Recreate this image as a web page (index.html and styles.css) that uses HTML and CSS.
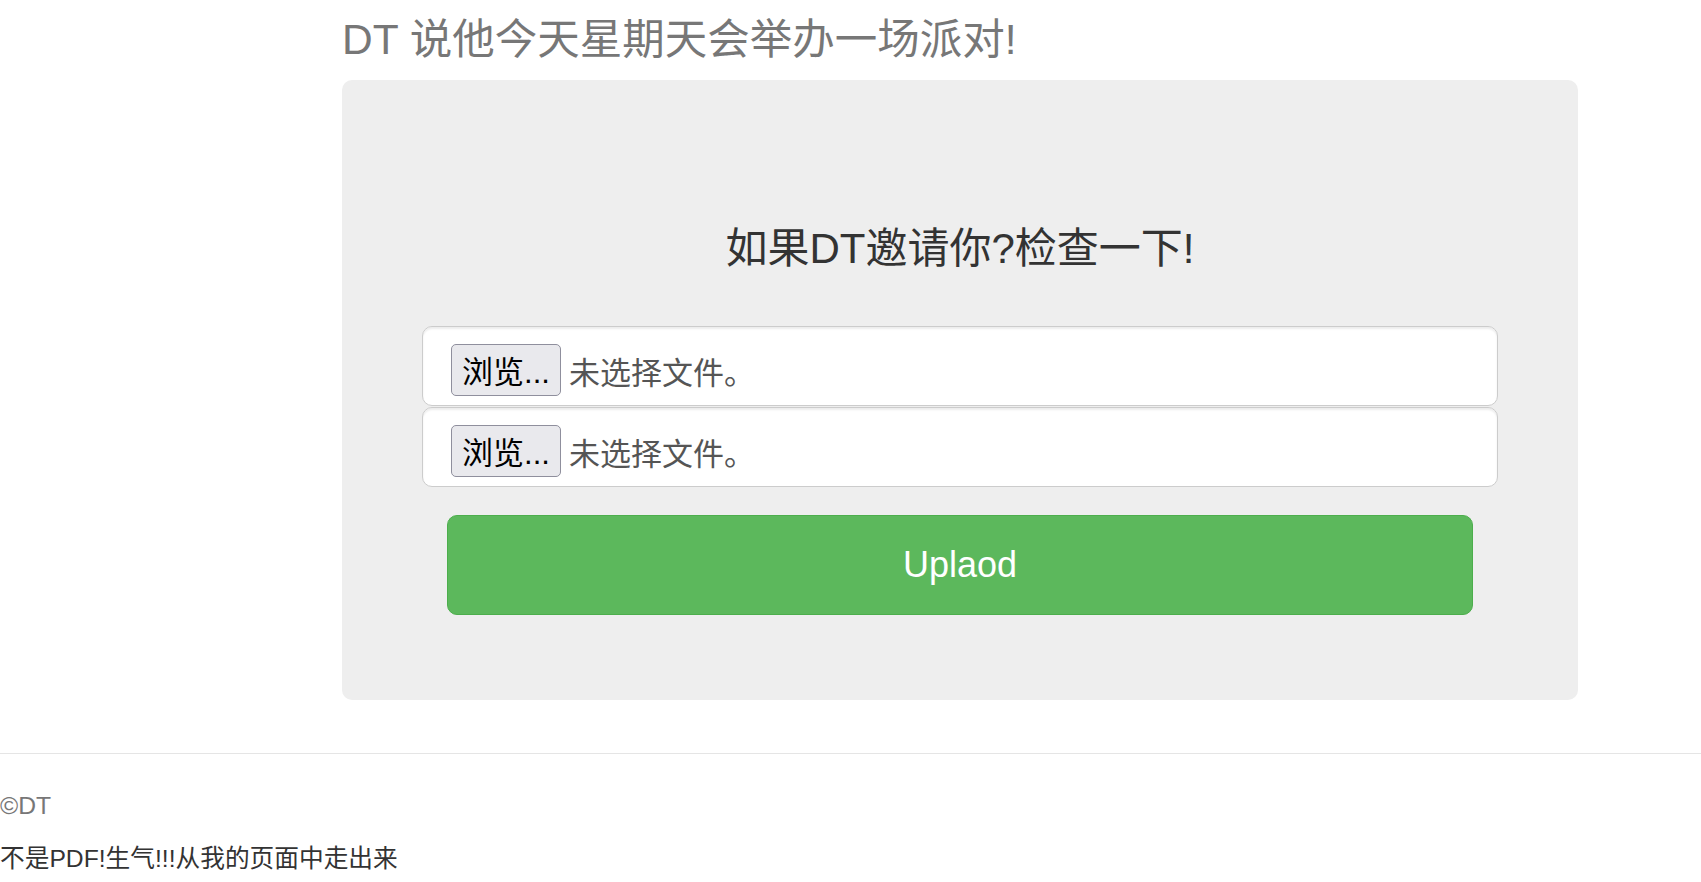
FILE: index.html
```html
<!DOCTYPE html>
<html lang="zh-CN">
<head>
  <meta charset="UTF-8" />
  <meta name="viewport" content="width=device-width, initial-scale=1.0"/>
  <title>DT Party</title>
  <link rel="stylesheet" href="styles.css">
</head>
<body>

  <div class="container">
    <div class="header">
      <h3 class="text-muted">DT 说他今天星期天会举办一场派对!</h3>
    </div>

    <div class="jumbotron">
      <h3>如果DT邀请你?检查一下!</h3>
      <form class="upload-form" onsubmit="return false;">
        <div class="file-list">
          <label class="file-field">
            <span class="browse">浏览...</span>
            <span class="file-name">未选择文件。</span>
            <input type="file" name="file1" hidden>
          </label>
          <label class="file-field">
            <span class="browse">浏览...</span>
            <span class="file-name">未选择文件。</span>
            <input type="file" name="file2" hidden>
          </label>
        </div>
        <button type="submit" class="btn-upload">Uplaod</button>
      </form>
    </div>
  </div>

  <footer class="footer">
    <p>&copy;DT</p>
  </footer>
  <p class="note">不是PDF!生气!!!从我的页面中走出来</p>

</body>
</html>
```

FILE: styles.css
```css
body {
  margin: 0;
  font-family: "Liberation Sans", "Noto Sans CJK SC", sans-serif;
  font-size: 24.7px;
  line-height: 35px;
  color: #333;
  background: #fff;
}

.container {
  width: 1236px;
  margin-left: 342px;
}

.header h3 {
  margin: 17px 0;
  font-size: 42.5px;
  line-height: 46px;
  font-weight: normal;
  color: #777;
}

.jumbotron {
  background-color: #eee;
  border-radius: 10px;
  padding: 84px 105px 85px;
  margin-bottom: 53px;
}

.jumbotron h3 {
  margin: 62px 0 54px;
  font-size: 42px;
  line-height: 46px;
  font-weight: normal;
  text-align: center;
  color: #333;
}

.file-list {
  display: flex;
  flex-direction: column;
  gap: 1px;
  margin: 0 -25px;
}

.file-field {
  display: flex;
  align-items: flex-start;
  box-sizing: border-box;
  height: 80px;
  padding: 17px 28px 0;
  background: #fff;
  border: 1px solid #ccc;
  border-radius: 10px;
  box-shadow: inset 0 2px 2px rgba(0, 0, 0, 0.075);
  cursor: pointer;
}

.browse {
  box-sizing: border-box;
  width: 110px;
  height: 52px;
  padding-top: 5px;
  line-height: 45px;
  text-align: center;
  font-size: 31px;
  color: #000;
  background: #e9e9ed;
  border: 1px solid #8f8f9d;
  border-radius: 5px;
  white-space: nowrap;
}

.file-name {
  margin-left: 8px;
  padding-top: 4px;
  font-size: 31px;
  line-height: 52px;
  color: #555;
}

.btn-upload {
  display: block;
  width: 100%;
  height: 100px;
  margin-top: 28px;
  font-family: inherit;
  font-size: 36px;
  color: #fff;
  background-color: #5cb85c;
  border: 1px solid #4cae4c;
  border-radius: 10px;
  cursor: pointer;
}

.btn-upload:hover {
  background-color: #449d44;
}

.footer {
  border-top: 1px solid #e5e5e5;
  padding-top: 34px;
  color: #777;
}

.footer p {
  margin: 0 0 17.5px;
}

.note {
  margin: 0;
}
```
